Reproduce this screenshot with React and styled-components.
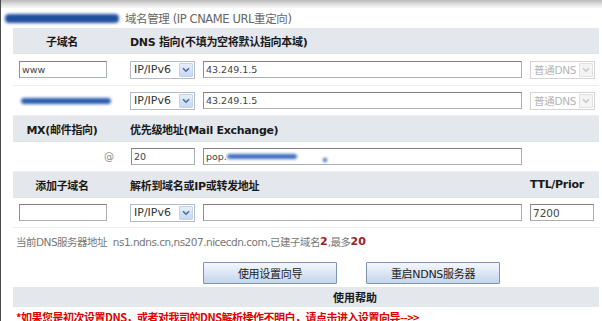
import React from "react";
import styled, { createGlobalStyle } from "styled-components";

const Global = createGlobalStyle`
  html, body { margin: 0; padding: 0; background: #fff; }
  body {
    font-family: "Liberation Sans", "Noto Sans CJK SC", sans-serif;
    font-size: 11px;
    color: #333;
  }
`;

const Page = styled.div`
  width: 602px;
  height: 321px;
  overflow: hidden;
  border-left: 1px solid #4a4a4a;
  box-sizing: border-box;
  position: relative;
`;

const TopStrip = styled.div`
  height: 8px;
  background: linear-gradient(#b9b9b9, #e4e4e4 60%, #f6f6f6);
`;

const TitleRow = styled.div`
  height: 20px;
  display: flex;
  align-items: center;
  padding-left: 4px;
  gap: 6px;
`;

const Blur = styled.span`
  display: inline-block;
  width: ${(p) => p.$w}px;
  height: ${(p) => p.$h}px;
  background: ${(p) => p.$c || "#2d5aa6"};
  border-radius: 4px;
  filter: blur(1.6px);
  flex: none;
`;

const TitleText = styled.span`
  color: #666;
  font-size: 11.5px;
  font-family: "DejaVu Sans", "Noto Sans CJK SC", sans-serif;
  letter-spacing: -0.4px;
`;

const Table = styled.div`
  margin-left: 12px;
  width: 586px;
`;

const Row = styled.div`
  display: grid;
  grid-template-columns: 117px 73px 327px 1fr;
  align-items: center;
  height: ${(p) => p.$h || 30}px;
  background: ${(p) => (p.$head ? "#e4e7ec" : "#fff")};
  border-bottom: 1px solid ${(p) => (p.$head ? "#dfe2e7" : "#eceef1")};
  box-sizing: border-box;
`;

const HeadCell = styled.div`
  font-weight: bold;
  font-size: 11px;
  color: #1a1a1a;
  font-family: "DejaVu Sans", "Noto Sans CJK SC", sans-serif;
  letter-spacing: -0.3px;
  grid-column: ${(p) => p.$span || "auto"};
  ${(p) => (p.$center ? "text-align:center; padding-right: 19px;" : "")}
`;

const Cell = styled.div`
  display: flex;
  align-items: center;
  padding-left: ${(p) => p.$pl ?? 0}px;
  justify-content: ${(p) => (p.$right ? "flex-end" : "flex-start")};
  padding-right: ${(p) => p.$pr ?? 0}px;
`;

const TextInput = styled.div`
  width: ${(p) => p.$w}px;
  height: 17px;
  box-sizing: border-box;
  border: 1px solid #a9aeb3;
  border-top-color: #7d8186;
  border-left-color: #8d9196;
  background: #fff;
  display: flex;
  align-items: center;
  padding-left: 2px;
  font-size: ${(p) => p.$fs || 9.5}px;
  color: #444;
  font-family: "DejaVu Sans", sans-serif;
  overflow: hidden;
  white-space: nowrap;
`;

const SelectBox = styled.div`
  width: 65px;
  height: 18px;
  box-sizing: border-box;
  border: 1px solid ${(p) => (p.$disabled ? "#d4d4d4" : "#b3bcc8")};
  background: #fff;
  display: flex;
  align-items: center;
  justify-content: space-between;
  padding: 0 1px 0 3px;
  font-family: "DejaVu Sans", "Noto Sans CJK SC", sans-serif;
  font-size: ${(p) => (p.$disabled ? 10.5 : 11)}px;
  color: ${(p) => (p.$disabled ? "#b4b4b4" : "#333")};
  letter-spacing: ${(p) => (p.$disabled ? "-0.3px" : "0")};
`;

const ArrowBtn = styled.span`
  width: 14px;
  height: 14px;
  box-sizing: border-box;
  border: 1px solid ${(p) => (p.$disabled ? "#e0e0e0" : "#c3d3ea")};
  background: ${(p) =>
    p.$disabled ? "#f4f4f4" : "linear-gradient(#e6eefb, #c7d8f2)"};
  display: flex;
  align-items: center;
  justify-content: center;
  border-radius: 1px;
`;

const At = styled.span`
  color: #888;
  font-size: 10px;
  font-family: "DejaVu Sans", sans-serif;
`;

const Info = styled.div`
  margin: 5px 0 0 15px;
  height: 16px;
  display: flex;
  align-items: center;
  color: #777;
  font-size: 10.5px;
  font-family: "DejaVu Sans", "Noto Sans CJK SC", sans-serif;
  letter-spacing: -0.5px;
  white-space: nowrap;
`;

const Strong = styled.b`
  color: #a02020;
  font-size: 11px;
  letter-spacing: 0;
`;

const ButtonBar = styled.div`
  display: flex;
  gap: 29px;
  padding-left: 202px;
  margin-top: 13px;
`;

const Button = styled.div`
  width: 134px;
  height: 22px;
  box-sizing: border-box;
  border: 1px solid #7d93b4;
  border-radius: 1px;
  background: linear-gradient(#f5f8fd, #dbe6f5 50%, #c4d5ee);
  display: flex;
  align-items: center;
  justify-content: center;
  font-size: 11px;
  color: #222;
  font-family: "DejaVu Sans", "Noto Sans CJK SC", sans-serif;
  letter-spacing: -0.3px;
`;

const HelpHead = styled.div`
  margin: 3px 0 0 12px;
  width: 586px;
  height: 20px;
  background: #e4e7ec;
  display: flex;
  align-items: center;
  padding-left: 320px;
  box-sizing: border-box;
  font-weight: bold;
  font-size: 11px;
  color: #1a1a1a;
  font-family: "Noto Sans CJK SC", sans-serif;
`;

const RedNote = styled.div`
  margin: 2px 0 0 15px;
  height: 16px;
  display: flex;
  align-items: center;
  color: #e00000;
  font-weight: bold;
  font-size: 11px;
  font-family: "Noto Sans CJK SC", sans-serif;
  white-space: nowrap;
  letter-spacing: -0.5px;
`;

const Chevron = ({ disabled }) => (
  <svg width="8" height="6" viewBox="0 0 8 6">
    <path
      d="M1 1.2 L4 4.2 L7 1.2"
      fill="none"
      stroke={disabled ? "#c8c8c8" : "#4a6a9c"}
      strokeWidth="1.6"
    />
  </svg>
);

const Select = ({ label, disabled }) => (
  <SelectBox $disabled={disabled}>
    <span>{label}</span>
    <ArrowBtn $disabled={disabled}>
      <Chevron disabled={disabled} />
    </ArrowBtn>
  </SelectBox>
);

export default function App() {
  return (
    <>
      <Global />
      <Page>
        <TopStrip />
        <TitleRow>
          <Blur $w={114} $h={9} $c="#1f4f9f" />
          <TitleText>域名管理 (IP CNAME URL重定向)</TitleText>
        </TitleRow>
        <Table>
          <Row $head $h={26}>
            <HeadCell $center>子域名</HeadCell>
            <HeadCell $span="2 / 5">DNS 指向(不填为空将默认指向本域)</HeadCell>
          </Row>
          <Row $h={32}>
            <Cell $pl={6}>
              <TextInput $w={88}>www</TextInput>
            </Cell>
            <Cell>
              <Select label="IP/IPv6" />
            </Cell>
            <Cell>
              <TextInput $w={319}>43.249.1.5</TextInput>
            </Cell>
            <Cell>
              <Select label="普通DNS" disabled />
            </Cell>
          </Row>
          <Row $h={30}>
            <Cell $pl={8}>
              <Blur $w={90} $h={6} $c="#2a5db0" />
            </Cell>
            <Cell>
              <Select label="IP/IPv6" />
            </Cell>
            <Cell>
              <TextInput $w={319}>43.249.1.5</TextInput>
            </Cell>
            <Cell>
              <Select label="普通DNS" disabled />
            </Cell>
          </Row>
          <Row $head $h={26}>
            <HeadCell $center>MX(邮件指向)</HeadCell>
            <HeadCell $span="2 / 5">优先级地址(Mail Exchange)</HeadCell>
          </Row>
          <Row $h={30}>
            <Cell $right $pr={16}>
              <At>@</At>
            </Cell>
            <Cell $pl={1}>
              <TextInput $w={64}>20</TextInput>
            </Cell>
            <Cell>
              <TextInput $w={319}>
                pop.
                <Blur $w={70} $h={5} $c="#3a6cc0" />
                <Blur $w={4} $h={4} $c="#1e4f9a" style={{ marginLeft: 26, marginTop: 6 }} />
              </TextInput>
            </Cell>
            <Cell />
          </Row>
          <Row $head $h={26}>
            <HeadCell $center>添加子域名</HeadCell>
            <HeadCell $span="2 / 4">解析到域名或IP或转发地址</HeadCell>
            <HeadCell>TTL/Prior</HeadCell>
          </Row>
          <Row $h={30}>
            <Cell $pl={6}>
              <TextInput $w={88} />
            </Cell>
            <Cell>
              <Select label="IP/IPv6" />
            </Cell>
            <Cell>
              <TextInput $w={319} />
            </Cell>
            <Cell>
              <TextInput $w={64} $fs={10.5}>7200</TextInput>
            </Cell>
          </Row>
        </Table>
        <Info>
          当前DNS服务器地址&nbsp; ns1.ndns.cn,ns207.nicecdn.com,已建子域名
          <Strong>2</Strong>,最多<Strong>20</Strong>
        </Info>
        <ButtonBar>
          <Button>使用设置向导</Button>
          <Button>重启NDNS服务器</Button>
        </ButtonBar>
        <HelpHead>使用帮助</HelpHead>
        <RedNote>*如果您是初次设置DNS，或者对我司的DNS解析操作不明白，请点击进入设置向导-->></RedNote>
      </Page>
    </>
  );
}
